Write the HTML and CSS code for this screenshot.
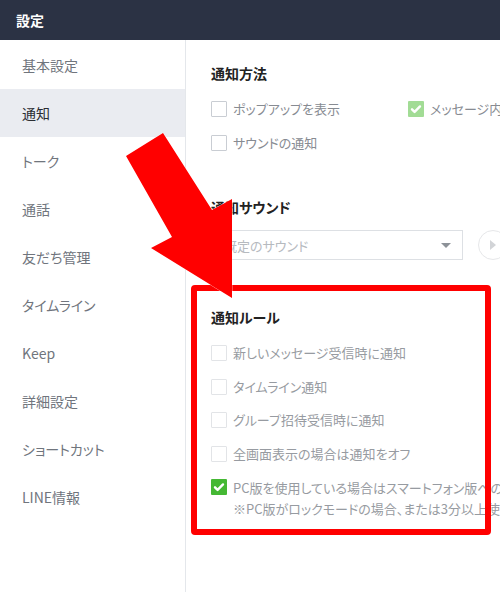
FILE: index.html
```html
<!DOCTYPE html>
<html lang="ja">
<head>
<meta charset="utf-8">
<title>設定</title>
<link rel="stylesheet" href="styles.css">
</head>
<body>
<div class="app">
  <header class="titlebar">設定</header>
  <div class="main">
    <nav class="sidebar">
      <div class="nav-item">基本設定</div>
      <div class="nav-item active">通知</div>
      <div class="nav-item">トーク</div>
      <div class="nav-item">通話</div>
      <div class="nav-item">友だち管理</div>
      <div class="nav-item">タイムライン</div>
      <div class="nav-item">Keep</div>
      <div class="nav-item">詳細設定</div>
      <div class="nav-item">ショートカット</div>
      <div class="nav-item">LINE情報</div>
    </nav>
    <section class="content">
      <h2 class="heading">通知方法</h2>
      <div class="grid2">
        <label class="row"><span class="box"></span><span class="label">ポップアップを表示</span></label>
        <label class="row"><span class="box checked dim"><svg viewBox="0 0 16 16"><path d="M4 8.3l2.6 2.6L12 5.4" /></svg></span><span class="label">メッセージ内容を表示</span></label>
        <label class="row"><span class="box"></span><span class="label">サウンドの通知</span></label>
      </div>

      <h2 class="heading h-sound">通知サウンド</h2>
      <div class="sound-row">
        <div class="select"><span class="placeholder">既定のサウンド</span><span class="caret"></span></div>
        <div class="play"><span class="play-tri"></span></div>
      </div>

      <h2 class="heading h-rule">通知ルール</h2>
      <div class="rules">
        <label class="row faint"><span class="box"></span><span class="label">新しいメッセージ受信時に通知</span></label>
        <label class="row faint"><span class="box"></span><span class="label">タイムライン通知</span></label>
        <label class="row faint"><span class="box"></span><span class="label">グループ招待受信時に通知</span></label>
        <label class="row faint"><span class="box"></span><span class="label">全画面表示の場合は通知をオフ</span></label>
        <label class="row faint multi"><span class="box checked"><svg viewBox="0 0 16 16"><path d="M4 8.3l2.6 2.6L12 5.4" /></svg></span><span class="label">PC版を使用している場合はスマートフォン版への通知をオフ<br>※PC版がロックモードの場合、または3分以上使用していない場合は通知されます</span></label>
      </div>
    </section>
  </div>

  <div class="annot-box"></div>
  <svg class="annot-arrow" viewBox="0 0 500 592" width="500" height="592">
    <polygon points="126,156 163,133 212,210 232,199 232,298 151,248 172,237" />
  </svg>
</div>
</body>
</html>
```
FILE: styles.css
```css
* { box-sizing: border-box; }
html, body { margin: 0; padding: 0; }
body {
  width: 500px;
  height: 592px;
  overflow: hidden;
  background: #fff;
  font-family: "Noto Sans CJK JP", "Noto Sans", sans-serif;
  font-feature-settings: "palt";
  color: #333;
}
.app {
  position: relative;
  width: 500px;
  height: 592px;
  display: flex;
  flex-direction: column;
}
.titlebar {
  height: 40px;
  flex: none;
  background: #2b3244;
  color: #fff;
  font-size: 14px;
  font-weight: bold;
  line-height: 40px;
  padding-left: 16px;
}
.main {
  flex: 1;
  display: flex;
  min-height: 0;
}
.sidebar {
  width: 186px;
  flex: none;
  border-right: 1px solid #e4e7eb;
  padding-top: 1px;
}
.nav-item {
  height: 48px;
  line-height: 48px;
  padding-left: 22px;
  font-size: 14px;
  color: #70757d;
}
.nav-item.active {
  background: #eaecf1;
  color: #2a2d33;
}
.content {
  flex: 1;
  min-width: 0;
  overflow: hidden;
  padding: 23px 0 0 25px;
  white-space: nowrap;
}
.heading {
  margin: 0;
  font-size: 14px;
  line-height: 20px;
  font-weight: bold;
  color: #222;
}
.grid2 {
  margin-top: 17px;
  display: grid;
  grid-template-columns: 197px auto;
  row-gap: 16px;
}
.row {
  display: flex;
  align-items: center;
  min-height: 18px;
  font-size: 13px;
  color: #878b92;
}
.box {
  width: 16px;
  height: 16px;
  flex: none;
  border: 1px solid #c9cdd3;
  border-radius: 1px;
  background: #fff;
  margin-right: 6px;
  display: flex;
  align-items: center;
  justify-content: center;
}
.box svg {
  width: 16px;
  height: 16px;
  fill: none;
  stroke: #fff;
  stroke-width: 2.4;
  stroke-linecap: round;
  stroke-linejoin: round;
}
.box.checked {
  border: none;
  background: #45b834;
}
.box.checked.dim {
  background: #a2dc95;
}
.label { line-height: 18px; }
.h-sound { margin-top: 45px; }
.sound-row {
  margin-top: 13px;
  display: flex;
  align-items: center;
}
.select {
  width: 252px;
  height: 30px;
  flex: none;
  border: 1px solid #dde0e4;
  display: flex;
  align-items: center;
  padding: 0 10px 0 12px;
}
.placeholder {
  flex: 1;
  font-size: 13px;
  color: #b6babf;
}
.caret {
  width: 0;
  height: 0;
  border-left: 5px solid transparent;
  border-right: 5px solid transparent;
  border-top: 5px solid #8d9298;
  margin-right: 1px;
}
.play {
  margin-left: 15px;
  width: 30px;
  height: 30px;
  flex: none;
  border: 1px solid #e6e7e9;
  border-radius: 50%;
  display: flex;
  align-items: center;
  padding-left: 11px;
}
.play-tri {
  width: 0;
  height: 0;
  border-top: 5px solid transparent;
  border-bottom: 5px solid transparent;
  border-left: 6px solid #d2d4d7;
}
.h-rule { margin-top: 47px; }
.rules {
  margin-top: 17px;
  display: flex;
  flex-direction: column;
  gap: 15.5px;
}
.row.faint { color: #979ba1; }
.row.faint .box { border-color: #e2e4e7; }
.row.faint .box.checked { border: none; }
.row.multi { align-items: flex-start; }
.row.multi .label { line-height: 21px; margin-top: -1px; }
.row.multi .box { margin-top: 1px; }

.annot-box {
  position: absolute;
  left: 191px;
  top: 285px;
  width: 300px;
  height: 250px;
  border: 6px solid #ff0000;
  border-radius: 4px;
}
.annot-arrow {
  position: absolute;
  left: 0;
  top: 0;
  pointer-events: none;
}
.annot-arrow polygon {
  fill: #ff0000;
  stroke: #ffffff;
  stroke-width: 1;
  stroke-opacity: 0.6;
  paint-order: stroke;
}
```
